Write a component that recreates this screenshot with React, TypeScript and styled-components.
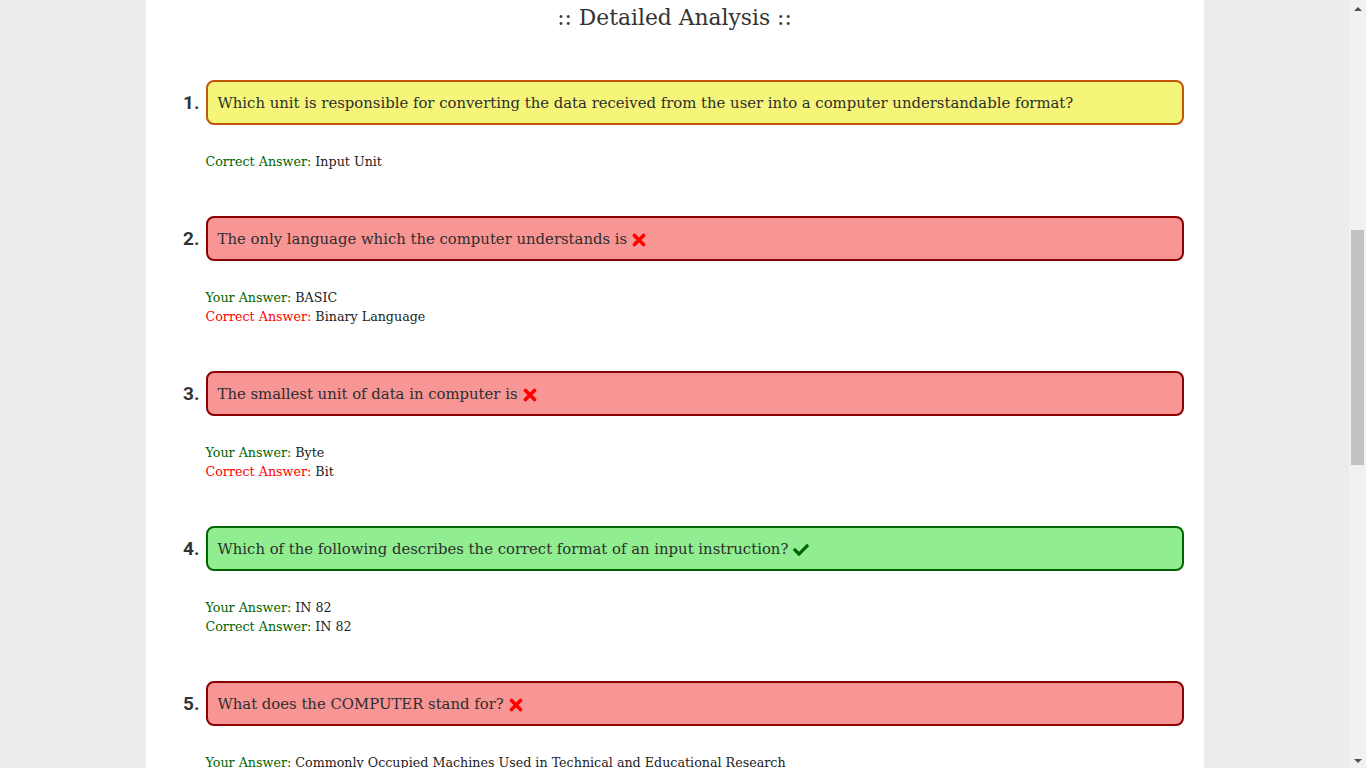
import React, { useLayoutEffect, useRef } from "react";
import styled, { createGlobalStyle } from "styled-components";
import { FaCheck } from "react-icons/fa";

type Status = "unanswered" | "wrong" | "right";

interface QuestionProps {
  text: string;
  yourAnswer?: string;
  correctAnswer: string;
  status: Status;
}

const SLAB = `"DejaVu Serif", "Liberation Serif", serif`;

const GlobalStyle = createGlobalStyle`
  html {
    overflow-y: scroll;
  }
  body {
    margin: 0;
    padding-right: 17px;
    background: #ececec;
    font-family: ${SLAB};
    color: #333333;
  }
`;

const Page = styled.div`
  width: 1058px;
  margin: 0 auto;
  background: #ffffff;
  padding: 0 20px 120px 20px;
  box-sizing: border-box;
`;

/* stand-in for the classic browser scrollbar shown in the screenshot */
const ScrollTrack = styled.div`
  position: fixed;
  top: 0;
  right: 0;
  width: 17px;
  height: 100vh;
  background: #f1f1f1;
  display: flex;
  flex-direction: column;
  align-items: center;
  justify-content: space-between;
  padding: 7px 0 5px;
  box-sizing: border-box;
`;

const ScrollThumb = styled.div`
  position: absolute;
  top: 230px;
  left: 2px;
  width: 13px;
  height: 235px;
  background: #c1c1c1;
`;

const Arrow = styled.div<{ $down?: boolean }>`
  width: 0;
  height: 0;
  border-left: 4px solid transparent;
  border-right: 4px solid transparent;
  ${(p) =>
    p.$down
      ? "border-top: 4px solid #505050;"
      : "border-bottom: 4px solid #505050;"}
`;

const Summary = styled.section`
  height: 696px;
  display: flex;
  flex-direction: column;
  align-items: center;
  justify-content: center;
  gap: 24px;
`;

const SummaryTitle = styled.h1`
  margin: 0;
  font-family: ${SLAB};
  font-weight: 300;
  font-size: 30px;
`;

const ScoreLine = styled.p`
  margin: 0;
  font-size: 18px;
`;

const Title = styled.h2`
  margin: 0;
  text-align: center;
  font-family: ${SLAB};
  font-weight: 300;
  font-size: 21.8px;
  line-height: 36px;
  color: #333333;
`;

const List = styled.ol`
  list-style: none;
  margin: 0;
  padding: 0 0 0 40px;
`;

const Item = styled.li`
  margin-top: 45px;

  &:first-child {
    margin-top: 44px;
  }
`;

const QuestionRow = styled.div`
  display: flex;
  align-items: center;
  gap: 6px;
  margin-left: -40px;
`;

const Number = styled.span`
  width: 34px;
  text-align: right;
  font-family: Roboto, "Liberation Sans", sans-serif;
  font-weight: 700;
  font-size: 19px;
  color: #333333;
`;

const palette: Record<Status, { bg: string; border: string }> = {
  unanswered: { bg: "#f5f57a", border: "#c2570c" },
  wrong: { bg: "#f89595", border: "#8b0000" },
  right: { bg: "#90ee90", border: "#006400" },
};

const QuestionBox = styled.div<{ $status: Status }>`
  flex: 1;
  background: ${(p) => palette[p.$status].bg};
  border: 2px solid ${(p) => palette[p.$status].border};
  border-radius: 8px;
  padding: 11px 10px 9px;
  font-size: 14.85px;
  line-height: 21px;
  color: #2e2e2e;
  display: flex;
  align-items: center;
  gap: 5px;
`;

const Answers = styled.div`
  margin-top: 27px;
  font-size: 12.7px;
  line-height: 19px;
  color: #222222;
`;

const Label = styled.span<{ $color: string }>`
  color: ${(p) => p.$color};
`;

const CrossSvg = styled.svg`
  width: 14px;
  height: 14px;
  flex: none;
`;

const WrongIcon = () => (
  <CrossSvg viewBox="0 0 14 14">
    <path
      d="M2.5 2.5 L11.5 11.5 M11.5 2.5 L2.5 11.5"
      stroke="#ff0000"
      strokeWidth="3.6"
      strokeLinecap="round"
      fill="none"
    />
  </CrossSvg>
);

const RightIcon = styled(FaCheck)`
  color: #006400;
  width: 16px;
  height: 16px;
  flex: none;
`;

const questions: QuestionProps[] = [
  {
    text: "Which unit is responsible for converting the data received from the user into a computer understandable format?",
    correctAnswer: "Input Unit",
    status: "unanswered",
  },
  {
    text: "The only language which the computer understands is",
    yourAnswer: "BASIC",
    correctAnswer: "Binary Language",
    status: "wrong",
  },
  {
    text: "The smallest unit of data in computer is",
    yourAnswer: "Byte",
    correctAnswer: "Bit",
    status: "wrong",
  },
  {
    text: "Which of the following describes the correct format of an input instruction?",
    yourAnswer: "IN 82",
    correctAnswer: "IN 82",
    status: "right",
  },
  {
    text: "What does the COMPUTER stand for?",
    yourAnswer: "Commonly Occupied Machines Used in Technical and Educational Research",
    correctAnswer:
      "Common Operating Machine Particularly Used for Technical, Education and Research",
    status: "wrong",
  },
  {
    text: "Which of the following is the brain of the computer?",
    yourAnswer: "Central Processing Unit",
    correctAnswer: "Central Processing Unit",
    status: "right",
  },
  {
    text: "Which of the following is not an input device?",
    correctAnswer: "Monitor",
    status: "unanswered",
  },
  {
    text: "1 KB is equal to",
    yourAnswer: "1000 Bytes",
    correctAnswer: "1024 Bytes",
    status: "wrong",
  },
  {
    text: "Which memory is volatile in nature?",
    yourAnswer: "RAM",
    correctAnswer: "RAM",
    status: "right",
  },
];

const Question: React.FC<QuestionProps & { index: number }> = ({
  index,
  text,
  yourAnswer,
  correctAnswer,
  status,
}) => (
  <Item>
    <QuestionRow>
      <Number>{index}.</Number>
      <QuestionBox $status={status}>
        <span>{text}</span>
        {status === "wrong" && <WrongIcon />}
        {status === "right" && <RightIcon />}
      </QuestionBox>
    </QuestionRow>
    <Answers>
      {yourAnswer && (
        <div>
          <Label $color="#006400">Your Answer:</Label> {yourAnswer}
        </div>
      )}
      <div>
        <Label $color={status === "wrong" ? "#ff0000" : "#006400"}>
          Correct Answer:
        </Label>{" "}
        {correctAnswer}
      </div>
    </Answers>
  </Item>
);

export default function App() {
  const titleRef = useRef<HTMLHeadingElement>(null);

  useLayoutEffect(() => {
    if (titleRef.current) {
      window.scrollTo(0, titleRef.current.offsetTop);
    }
  }, []);

  return (
    <>
      <GlobalStyle />
      <Page>
        <Summary>
          <SummaryTitle>:: Quiz Result ::</SummaryTitle>
          <ScoreLine>You scored 3 out of 9</ScoreLine>
        </Summary>
        <Title ref={titleRef}>:: Detailed Analysis ::</Title>
        <List>
          {questions.map((q, i) => (
            <Question key={i} index={i + 1} {...q} />
          ))}
        </List>
      </Page>
      <ScrollTrack>
        <Arrow />
        <ScrollThumb />
        <Arrow $down />
      </ScrollTrack>
    </>
  );
}
